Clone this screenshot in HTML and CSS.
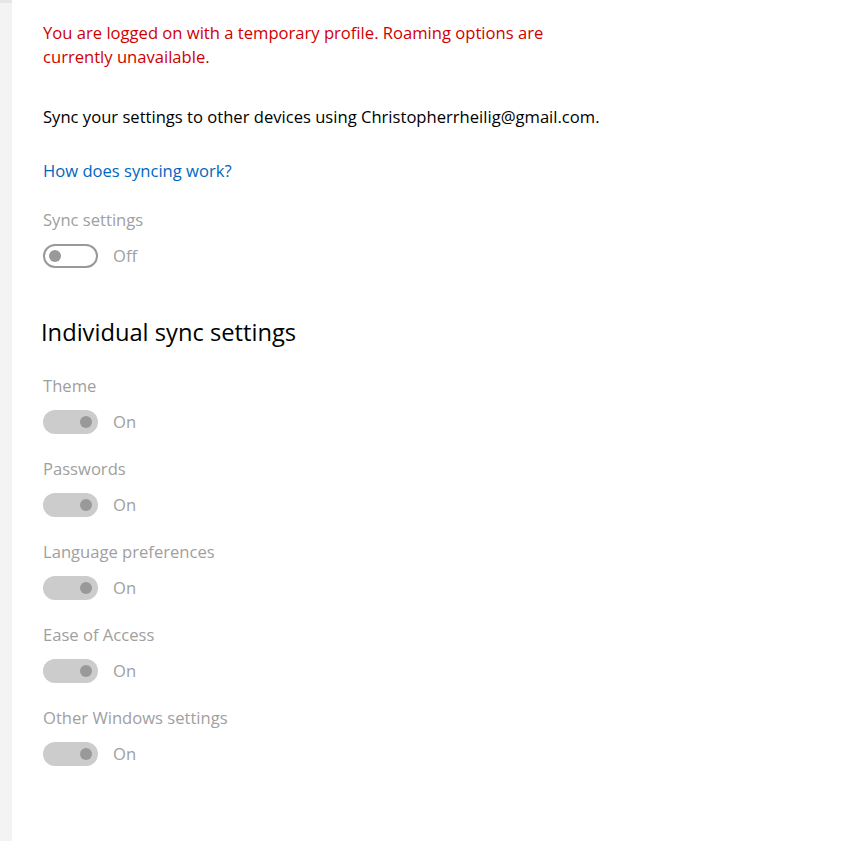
FILE: index.html
```html
<!DOCTYPE html>
<html lang="en">
<head>
    <meta charset="UTF-8">
    <title>Sync your settings</title>
    <link rel="stylesheet" href="styles.css">
</head>
<body>
    <div class="barra-lateral"></div>

    <main class="conteudo">
        <p class="aviso">You are logged on with a temporary profile. Roaming options are currently unavailable.</p>

        <p class="descricao">Sync your settings to other devices using Christopherrheilig@gmail.com.</p>

        <a class="link" href="#">How does syncing work?</a>

        <div class="opcao">
            <div class="rotulo">Sync settings</div>
            <div class="controle">
                <span class="chave chave-off"><span class="bolinha"></span></span>
                <span class="estado">Off</span>
            </div>
        </div>

        <h2>Individual sync settings</h2>

        <div class="opcao">
            <div class="rotulo">Theme</div>
            <div class="controle">
                <span class="chave chave-on"><span class="bolinha"></span></span>
                <span class="estado">On</span>
            </div>
        </div>

        <div class="opcao">
            <div class="rotulo">Passwords</div>
            <div class="controle">
                <span class="chave chave-on"><span class="bolinha"></span></span>
                <span class="estado">On</span>
            </div>
        </div>

        <div class="opcao">
            <div class="rotulo">Language preferences</div>
            <div class="controle">
                <span class="chave chave-on"><span class="bolinha"></span></span>
                <span class="estado">On</span>
            </div>
        </div>

        <div class="opcao">
            <div class="rotulo">Ease of Access</div>
            <div class="controle">
                <span class="chave chave-on"><span class="bolinha"></span></span>
                <span class="estado">On</span>
            </div>
        </div>

        <div class="opcao">
            <div class="rotulo">Other Windows settings</div>
            <div class="controle">
                <span class="chave chave-on"><span class="bolinha"></span></span>
                <span class="estado">On</span>
            </div>
        </div>
    </main>
</body>
</html>
```

FILE: styles.css
```css
html, body {
    margin: 0;
    height: 100%;
}
body {
    display: flex;
    background-color: #fff;
    font-family: "Open Sans", "Noto Sans", sans-serif;
    font-size: 16.6px;
    color: #000;
    overflow: hidden;
}
.barra-lateral {
    width: 12px;
    flex-shrink: 0;
    background-color: #f3f3f3;
    border-top: 3px solid #e6e6e6;
}
.conteudo {
    padding: 21px 0 0 31px;
    display: flex;
    flex-direction: column;
    align-items: flex-start;
}
p {
    margin: 0;
    line-height: 24px;
}
.aviso {
    color: #d00000;
    width: 560px;
}
.descricao {
    margin-top: 36px;
}
.link {
    margin-top: 30px;
    color: #0067c0;
    text-decoration: none;
    line-height: 24px;
}
.opcao {
    margin-top: 25px;
}
.rotulo {
    color: #a0a0a0;
    line-height: 24px;
}
.controle {
    display: flex;
    align-items: center;
    gap: 15px;
    margin-top: 12px;
}
.chave {
    box-sizing: border-box;
    width: 55px;
    height: 24px;
    border-radius: 12px;
    display: flex;
    align-items: center;
    padding: 0 6px;
}
.chave-off {
    border: 2px solid #999;
    justify-content: flex-start;
    padding: 0 4px;
}
.chave-on {
    background-color: #ccc;
    justify-content: flex-end;
}
.bolinha {
    width: 12px;
    height: 12px;
    border-radius: 50%;
    background-color: #999;
}
.estado {
    color: #a0a0a0;
    line-height: 24px;
}
h2 {
    margin: 48px 0 0 -2px;
    font-size: 23.7px;
    font-weight: normal;
    line-height: 32px;
}
h2 + .opcao {
    margin-top: 26px;
}
.opcao + .opcao {
    margin-top: 23px;
}
```
